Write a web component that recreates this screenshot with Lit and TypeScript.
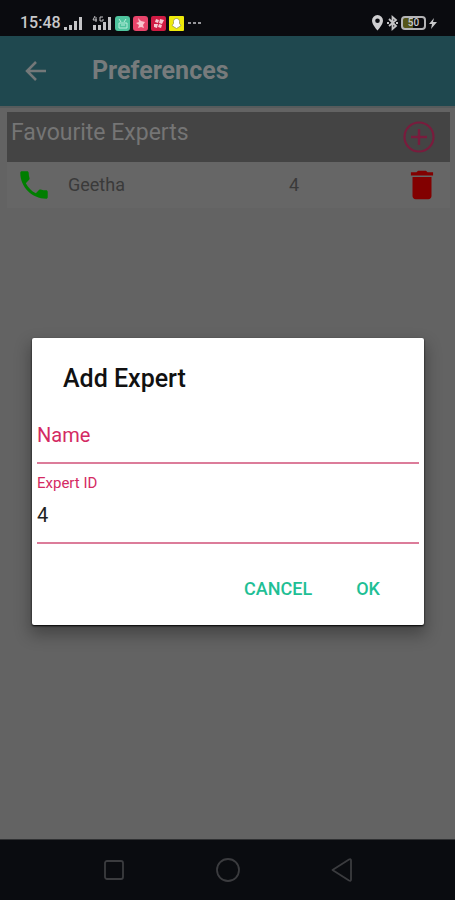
import { LitElement, html, css, svg } from "lit";
import { customElement } from "lit/decorators.js";

const signal = svg`<path d="M0 13v-3h3v3zM5 13V8h3v5zM10 13V4h3v9zM15 13V0h3v13z" fill="#c4c4c6"/>`;

@customElement("status-bar")
class StatusBar extends LitElement {
  static styles = css`
    :host {
      display: flex;
      justify-content: space-between;
      align-items: flex-end;
      height: 36px;
      box-sizing: border-box;
      padding: 0 17px 4px 20px;
      background: #0a0b0f;
      color: #c8c8ca;
      font: 500 16px/18px Roboto, sans-serif;
    }
    .group { display: flex; align-items: center; height: 18px; }
    .left { gap: 3px; }
    .right { gap: 2px; }
    svg { display: block; flex: none; }
    .sim { margin-right: 7px; }
    .battery {
      box-sizing: border-box;
      width: 25px;
      height: 14px;
      border: 2px solid #b4b4b6;
      border-radius: 4px;
      background: linear-gradient(90deg, #55551a 50%, #0a0b0f 50%);
      font-size: 10px;
      line-height: 10px;
      text-align: center;
    }
  `;

  render() {
    return html`
      <div class="group left">
        <span class="time">15:48</span>
        <svg class="sim" width="18" height="13" viewBox="0 0 18 13">${signal}</svg>
        <svg width="20" height="14" viewBox="0 0 20 14">
          <path d="M1 9h3v5H1zM6 9h3v5H6zM11 6h3v8h-3zM16 1h3v13h-3z" fill="#c4c4c6"/>
          <path d="M3 0L1 4h4M4 1v5M11 1H8v4h3V3" fill="none" stroke="#c4c4c6"/>
        </svg>
        <svg width="15" height="15" viewBox="0 0 15 15">
          <rect width="15" height="15" rx="3" fill="#4fc49e"/>
          <path d="M4 3l2 3M11 3L9 6M4 7h8v5H4zM6 9h4" stroke="#b9eedb" fill="none"/>
        </svg>
        <svg width="15" height="15" viewBox="0 0 15 15">
          <rect width="15" height="15" rx="3" fill="#e8456b"/>
          <path d="M5 2l3 3 4 1-2 3 1 3-3-1-3 1 1-3-3-2 3-1z" fill="#f8c5cd"/>
        </svg>
        <svg width="15" height="15" viewBox="0 0 15 15">
          <rect width="15" height="15" rx="2" fill="#cf1b43"/>
          <path d="M5 3l3 1-1 3-3-1zM9 3l4 1-2 4-3-1zM3 8l4 0-1 4-3-1zM8 8l3 1-1 3-3-1z" fill="#f6cbd4"/>
        </svg>
        <svg width="15" height="15" viewBox="0 0 15 15">
          <rect width="15" height="15" rx="1" fill="#eeea0b"/>
          <path d="M7.500 2.500c2 0 3 1.500 3 3v2l1.500 2-2 1.500-2.500 1.500L5 11 3 9.500l1.500-2v-2c0-1.500 1-3 3-3z" fill="#fff" stroke="#97954a" stroke-width=".8"/>
        </svg>
        <svg width="14" height="4" viewBox="0 0 14 4">
          <path d="M1 2h3M6 2h3M11 2h3" stroke="#96969a" stroke-width="2"/>
        </svg>
      </div>
      <div class="group right">
        <svg width="13" height="16" viewBox="0 0 13 16">
          <path fill-rule="evenodd" d="M6.500 0A5.700 5.700 0 0 0 1 5.700C1 9.500 6.500 15.500 6.500 15.500S12 9.500 12 5.700A5.700 5.700 0 0 0 6.500 0zm0 3.500a2.300 2.300 0 1 1 0 4.600 2.300 2.300 0 0 1 0-4.600z" fill="#cfcfd1"/>
        </svg>
        <svg width="13" height="16" viewBox="0 0 13 16">
          <path d="M3 4l7 7-3.500 3V2L10 5l-7 6M1 8h2M10 8h2" fill="none" stroke="#c4c4c6" stroke-width="1.800"/>
        </svg>
        <span class="battery">50</span>
        <svg width="10" height="13" viewBox="0 0 10 13">
          <path d="M6 1L1 7h3l-1 5 6-7H5z" fill="#c8c8ca"/>
        </svg>
      </div>
    `;
  }
}

@customElement("add-expert-dialog")
class AddExpertDialog extends LitElement {
  static styles = css`
    :host {
      display: block;
      box-sizing: border-box;
      width: 100%;
      padding: 24px 5px 18px;
      background: #fff;
      border-radius: 2px;
      box-shadow: 0 1px 2px #000, 0 8px 16px 2px rgba(0, 0, 0, 0.3);
      font-family: Roboto, sans-serif;
    }
    h2 {
      margin: 0 26px 26px;
      font-size: 25px;
      line-height: 34px;
      font-weight: 500;
      color: #111;
    }
    .field {
      display: flex;
      flex-direction: column;
      border-bottom: 2px solid #dc7c9a;
      color: #d42a63;
    }
    .name { position: relative; height: 40px; }
    .name label { position: absolute; inset: 0 auto auto 0; font-size: 20px; line-height: 26px; }
    .id { height: 78px; }
    .id label { padding-top: 10px; font-size: 15px; line-height: 18px; }
    input {
      width: 100%;
      box-sizing: border-box;
      border: 0;
      padding: 0;
      outline: 0;
      background: transparent;
      color: #222;
      font: 20px/26px Roboto, sans-serif;
      height: 26px;
    }
    .id input { margin-top: 10px; }
    .actions {
      display: flex;
      justify-content: flex-end;
      gap: 12px;
      margin-top: 27px;
      padding-right: 23px;
    }
    button {
      border: 0;
      background: none;
      padding: 0 16px;
      color: #1fbf95;
      font: 500 18px/36px Roboto, sans-serif;
    }
  `;

  render() {
    return html`
      <h2>Add Expert</h2>
      <div class="field name">
        <label for="name">Name</label>
        <input id="name" type="text" />
      </div>
      <div class="field id">
        <label for="expert">Expert ID</label>
        <input id="expert" type="text" value="4" />
      </div>
      <div class="actions">
        <button type="button">CANCEL</button>
        <button type="button">OK</button>
      </div>
    `;
  }
}

@customElement("app-root")
class AppRoot extends LitElement {
  static styles = css`
    :host {
      position: relative;
      display: flex;
      flex-direction: column;
      min-height: 100vh;
      background: #636363;
      font-family: Roboto, sans-serif;
    }
    svg { display: block; }
    button {
      display: block;
      border: 0;
      padding: 0;
      background: none;
    }
    header {
      display: flex;
      align-items: center;
      gap: 44px;
      height: 70px;
      padding-left: 24px;
      background: #1f484f;
      border-bottom: 2px solid #565b5c;
    }
    h1 { margin: 0; font-size: 25px; line-height: 32px; font-weight: 700; color: #777b7c; }
    main { flex: 1; padding: 4px 5px 0 7px; }
    .section {
      display: flex;
      justify-content: space-between;
      height: 50px;
      padding: 0 14px 0 4px;
      background: #444;
    }
    .section h2 {
      margin: 0;
      padding-top: 5px;
      font-size: 23px;
      line-height: 32px;
      font-weight: 400;
      color: #757575;
    }
    .section button { align-self: center; }
    .row {
      display: grid;
      grid-template-columns: 61px 1fr 1fr 40px;
      align-items: center;
      height: 46px;
      padding: 0 8px 0 0;
      background: #666;
      color: #3a3a3a;
      font-size: 18px;
      line-height: 24px;
    }
    .row .call { padding-left: 11px; }
    .row .number { padding-left: 54px; }
    nav {
      display: flex;
      justify-content: center;
      gap: 90px;
      align-items: center;
      height: 60px;
      background: #0a0c10;
      border-top: 1px solid #303133;
    }
    .overlay {
      position: absolute;
      inset: 0;
      display: flex;
      align-items: center;
      padding: 62px 31px 0 32px;
    }
  `;

  render() {
    return html`
      <status-bar></status-bar>
      <header>
        <button aria-label="Back">
          <svg width="24" height="24" viewBox="0 0 24 24">
            <path d="M22 12H4M12 3l-9 9 9 9" fill="none" stroke="#747879" stroke-width="2.500"/>
          </svg>
        </button>
        <h1>Preferences</h1>
      </header>
      <main>
        <section class="section">
          <h2>Favourite Experts</h2>
          <button aria-label="Add expert">
            <svg width="34" height="34" viewBox="0 0 34 34">
              <circle cx="17" cy="17" r="14.500" fill="none" stroke="#791c3d" stroke-width="2.200"/>
              <path d="M17 9v16M9 17h16" stroke="#791c3d" stroke-width="2.500"/>
            </svg>
          </button>
        </section>
        <div class="row">
          <button class="call" aria-label="Call Geetha">
            <svg width="32" height="32" viewBox="1.500 1.500 21 21">
              <path d="M6.620 10.790c1.440 2.830 3.760 5.140 6.590 6.590l2.200-2.200c.27-.27.67-.36 1.020-.24 1.120.37 2.330.57 3.570.57.550 0 1 .45 1 1V20c0 .550-.45 1-1 1-9.390 0-17-7.610-17-17 0-.55.450-1 1-1h3.500c.550 0 1 .45 1 1 0 1.250.2 2.450.57 3.570.110.350.030.740-.25 1.020l-2.200 2.200z" fill="#007e00"/>
            </svg>
          </button>
          <span>Geetha</span>
          <span class="number">4</span>
          <button aria-label="Delete Geetha">
            <svg width="40" height="38" viewBox="0 0 24 24" preserveAspectRatio="xMidYMid meet">
              <path d="M6 19c0 1.100.9 2 2 2h8c1.100 0 2-.9 2-2V7H6v12zM19 4h-3.500l-1-1h-5l-1 1H5v2h14V4z" fill="#820000"/>
            </svg>
          </button>
        </div>
      </main>
      <nav>
        <button aria-label="Recent apps">
          <svg width="24" height="24" viewBox="0 0 24 24">
            <rect x="3" y="3" width="18" height="18" rx="2" fill="none" stroke="#3b3c3f" stroke-width="1.800"/>
          </svg>
        </button>
        <button aria-label="Home">
          <svg width="24" height="24" viewBox="0 0 24 24">
            <circle cx="12" cy="12" r="11" fill="none" stroke="#3b3c3f" stroke-width="1.800"/>
          </svg>
        </button>
        <button aria-label="Back">
          <svg width="24" height="24" viewBox="0 0 24 24">
            <path d="M2.500 12L19 1.500q2-1 2 1v19q0 2-2 1z" fill="none" stroke="#3b3c3f" stroke-width="1.800" stroke-linejoin="round"/>
          </svg>
        </button>
      </nav>
      <div class="overlay"><add-expert-dialog role="dialog" aria-label="Add Expert"></add-expert-dialog></div>
    `;
  }
}
